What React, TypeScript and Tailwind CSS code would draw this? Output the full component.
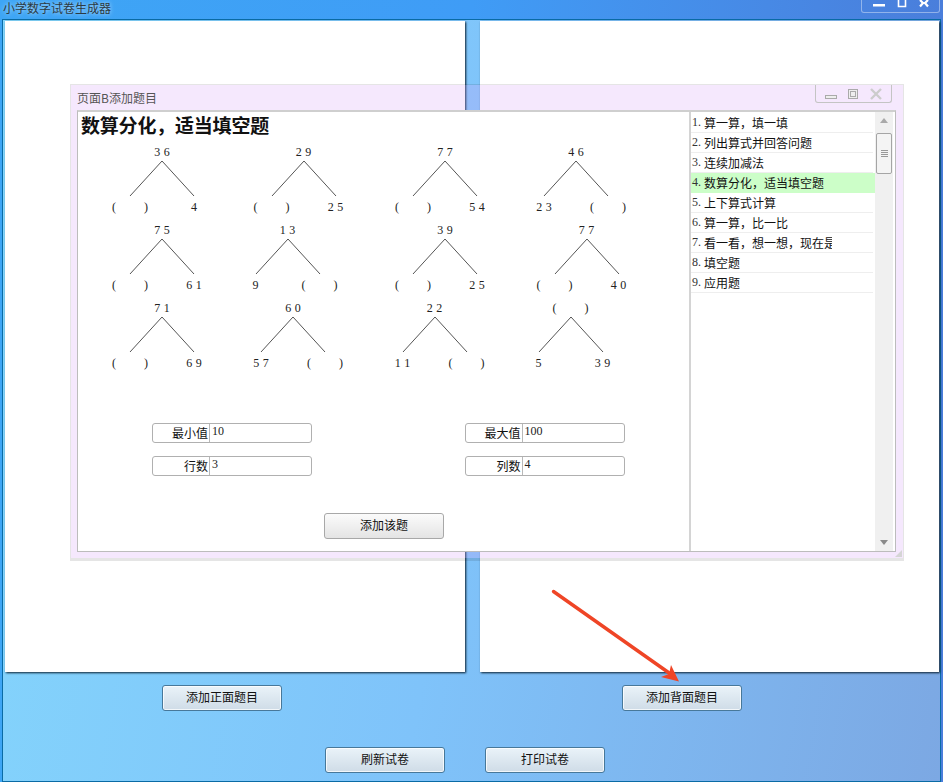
import React from "react";

const FONT = "font-['Liberation_Serif','Noto_Sans_CJK_SC',serif]";

type TreeData = { top: string; left: string; right: string; ml: string };

const P = "()";
const ML_PAREN = "ml-[-14px]";
const ML_TWO = "ml-[-24.5px]";
const ML_ONE = "ml-[-30px]";

const trees: TreeData[] = [
  { top: "3 6", left: P, right: "4", ml: ML_PAREN },
  { top: "2 9", left: P, right: "2 5", ml: ML_PAREN },
  { top: "7 7", left: P, right: "5 4", ml: ML_PAREN },
  { top: "4 6", left: "2 3", right: P, ml: ML_TWO },
  { top: "7 5", left: P, right: "6 1", ml: ML_PAREN },
  { top: "1 3", left: "9", right: P, ml: ML_ONE },
  { top: "3 9", left: P, right: "2 5", ml: ML_PAREN },
  { top: "7 7", left: P, right: "4 0", ml: ML_PAREN },
  { top: "7 1", left: P, right: "6 9", ml: ML_PAREN },
  { top: "6 0", left: "5 7", right: P, ml: ML_TWO },
  { top: "2 2", left: "1 1", right: P, ml: ML_TWO },
  { top: P, left: "5", right: "3 9", ml: ML_ONE },
];

const items = [
  "算一算，填一填",
  "列出算式并回答问题",
  "连续加减法",
  "数算分化，适当填空题",
  "上下算式计算",
  "算一算，比一比",
  "看一看，想一想，现在是",
  "填空题",
  "应用题",
];

function Value({ v }: { v: string }) {
  if (v === P)
    return (
      <span className="inline-flex justify-center gap-7">
        <span>(</span>
        <span>)</span>
      </span>
    );
  return <span className="tracking-[0.25px]">{v}</span>;
}

function Tree({ t }: { t: TreeData }) {
  return (
    <div className={`flex w-[128px] flex-col items-center text-[12px] leading-[14px] text-[#222] ${t.ml}`}>
      <div className="h-[14px] whitespace-nowrap">
        <Value v={t.top} />
      </div>
      <svg className="mt-[1px] block" width="66" height="37" viewBox="-1 -1 66 37">
        <path d="M32 0 L0 35 M32 0 L64 35" stroke="#555" strokeWidth="1" fill="none" />
      </svg>
      <div className="mt-[3px] grid h-[14px] w-full grid-cols-2 whitespace-nowrap text-center">
        <div>
          <Value v={t.left} />
        </div>
        <div>
          <Value v={t.right} />
        </div>
      </div>
    </div>
  );
}

function Field({ label, value }: { label: string; value: string }) {
  return (
    <div className="flex h-[20px] w-[160px] rounded-[3px] border border-[#b0b0b0] text-[12px] text-[#111]">
      <div className="w-[57px] border-r border-[#b8b8b8] pr-[1px] text-right text-[12px] leading-[20px]">{label}</div>
      <div className="pl-[2px] leading-[15px] text-[#222]">{value}</div>
    </div>
  );
}

function BlueButton({ label }: { label: string }) {
  return (
    <button className="h-[26px] w-[120px] rounded-[3px] border border-[#47789a] bg-linear-to-b from-[#eaf3f9] to-[#cfdce7] text-[12px] leading-[22px] text-[#111] shadow-[inset_0_0_0_1px_rgba(255,255,255,0.75)]">
      {label}
    </button>
  );
}

export default function App() {
  return (
    <div className={`relative h-[783px] w-[944px] overflow-hidden bg-white ${FONT}`}>
      <div className="h-[782px] w-[943px] bg-linear-to-r from-[#3ea6f5] via-[#3f9cf6] to-[#4a7edb]">
        {/* Title bar */}
        <div className="flex h-[19px] items-start justify-between pl-[3px] pr-[3px]">
          <span className="font-['Noto_Sans_CJK_SC',sans-serif] text-[12px] leading-[16px] text-[#2b3a44] [text-shadow:0_0_4px_rgba(255,255,255,0.7)]">
            小学数字试卷生成器
          </span>
          <div className="flex h-[13px] w-[79px] items-start justify-around rounded-b-[3px] border border-t-0 border-white/40 px-[4px]">
            <svg width="14" height="8" viewBox="0 0 14 8">
              <rect x="1" y="4" width="12" height="2.5" fill="#fff" />
            </svg>
            <svg width="10" height="8" viewBox="0 0 10 8">
              <path d="M1.5 0 V6.5 H8.5 V0" stroke="#fff" strokeWidth="1.6" fill="none" />
            </svg>
            <svg width="12" height="8" viewBox="0 0 12 8">
              <path d="M2 0 L5 3 L2 6.5 M10 0 L7 3 L10 6.5 M5 3 H7" stroke="#fff" strokeWidth="2.2" fill="none" />
            </svg>
          </div>
        </div>

        {/* Client area */}
        <div className="ml-[2px] h-[763px] w-[939px] border border-[#0a6ba5] bg-[linear-gradient(100deg,#84d6fc_0%,#7fc3fa_50%,#7ca8e3_100%)]">
          <div className="flex gap-[15px] pl-[2px] pt-[1px]">
            <div className="h-[651px] w-[460px] bg-white shadow-[1px_1px_2px_#0b2030]" />
            <div className="h-[651px] w-[459px] bg-white shadow-[1px_1px_2px_#0b2030]" />
          </div>
          <div className="mt-[13px] flex gap-[340px] pl-[159px]">
            <BlueButton label="添加正面题目" />
            <BlueButton label="添加背面题目" />
          </div>
          <div className="mt-[36px] flex gap-[40px] pl-[322px]">
            <BlueButton label="刷新试卷" />
            <BlueButton label="打印试卷" />
          </div>
        </div>
      </div>

      {/* Dialog */}
      <div className="absolute left-[70px] top-[84px] flex h-[477px] w-[834px] flex-col border border-b-[3px] border-black/10 bg-[#d7a3f7]/25 bg-clip-padding">
        <div className="flex h-[25px] items-start justify-between pl-[6px] pr-[11px]">
          <span className="pt-[4px] font-['Noto_Sans_CJK_SC',sans-serif] text-[12px] leading-[18px] text-[#555]">
            页面B添加题目
          </span>
          <div className="flex h-[18px] w-[77px] items-center justify-around rounded-b-[3px] border border-t-0 border-[#c4c4c4] px-[3px]">
            <svg width="14" height="12" viewBox="0 0 14 12">
              <rect x="1.5" y="7.5" width="11" height="3" fill="#eee" stroke="#aaa" />
            </svg>
            <svg width="12" height="12" viewBox="0 0 12 12">
              <rect x="1.5" y="1.5" width="9" height="9" fill="#eee" stroke="#aaa" />
              <rect x="3.5" y="3.5" width="5" height="5" fill="none" stroke="#aaa" />
            </svg>
            <svg width="14" height="12" viewBox="0 0 14 12">
              <path d="M2 1 L12 11 M12 1 L2 11" stroke="#ccc" strokeWidth="2.4" fill="none" />
            </svg>
          </div>
        </div>

        <div className="ml-[6px] flex h-[442px] w-[819px] border border-t-2 border-[#bcbcbc] border-t-[#cfcfcf] bg-white">
          {/* Left pane */}
          <div className="w-[613px] border-r-2 border-[#d4d4d4]">
            <div className="h-[26px] pl-[3px] font-['Noto_Sans_CJK_SC',sans-serif] text-[19px] font-bold leading-[26px] tracking-[-0.2px] text-[#111]">
              数算分化，适当填空题
            </div>
            <div className="ml-[34px] mt-[7px] grid grid-cols-[repeat(4,141.5px)] gap-y-[9px]">
              {trees.map((t, i) => (
                <Tree key={i} t={t} />
              ))}
            </div>
            <div className="ml-[74px] mt-[53px] grid grid-cols-[312.5px_160px] gap-y-[13px]">
              <Field label="最小值" value="10" />
              <Field label="最大值" value="100" />
              <Field label="行数" value="3" />
              <Field label="列数" value="4" />
            </div>
            <button className="ml-[246px] mt-[37px] h-[26px] w-[120px] rounded-[3px] border border-[#a8a8a8] bg-linear-to-b from-[#fbfbfb] to-[#e4e4e4] text-[12px] text-[#111]">
              添加该题
            </button>
          </div>

          {/* List */}
          <div className="w-[184px] pt-[1px] text-[12px] text-[#111]">
            {items.map((it, i) => (
              <div
                key={it}
                className={
                  i === 3
                    ? "flex h-[20px] w-[184px] items-center bg-[#ccfec8] pl-[1px] pt-[2px]"
                    : "flex h-[20px] w-[182px] items-center border-b border-[#eeeeee] pl-[1px] pt-[2px]"
                }
              >
                <span className="mb-[4px] w-[12px] shrink-0 text-[12px] leading-none text-[#333]">{i + 1}.</span>
                <span className="w-[128px] overflow-hidden whitespace-nowrap leading-[16px]">{it}</span>
              </div>
            ))}
          </div>

          {/* Scrollbar */}
          <div className="flex w-[18px] flex-col items-center bg-[#f0f0f0]">
            <svg className="mt-[6px]" width="10" height="6" viewBox="0 0 10 6">
              <path d="M5 0 L9 5 H1 Z" fill="#a9a9a9" />
            </svg>
            <div className="mt-[9px] flex h-[41px] w-[16px] flex-col items-center justify-center gap-[1px] rounded-[2px] border border-[#a5a5a5] bg-[#f4f4f4]">
              <div className="h-[1px] w-[7px] bg-[#999]" />
              <div className="h-[1px] w-[7px] bg-[#999]" />
              <div className="h-[1px] w-[7px] bg-[#999]" />
              <div className="h-[1px] w-[7px] bg-[#999]" />
            </div>
            <svg className="mt-auto mb-[5px]" width="10" height="6" viewBox="0 0 10 6">
              <path d="M1 0 H9 L5 5 Z" fill="#8a8a8a" />
            </svg>
          </div>
        </div>

        <svg className="absolute bottom-[1px] right-[1px]" width="7" height="7" viewBox="0 0 7 7">
          <path d="M7 0 V7 H0 Z" fill="#d5d5d5" />
        </svg>
      </div>

      {/* Annotation arrow */}
      <svg className="pointer-events-none absolute left-0 top-0" width="944" height="783" viewBox="0 0 944 783">
        <path d="M553.5 591.5 L672 675" stroke="#ef4526" strokeWidth="3.4" strokeLinecap="round" fill="none" />
        <path d="M671 665 L679 681.5 L661 677 L669 674 Z" fill="#ef4526" />
      </svg>
    </div>
  );
}
